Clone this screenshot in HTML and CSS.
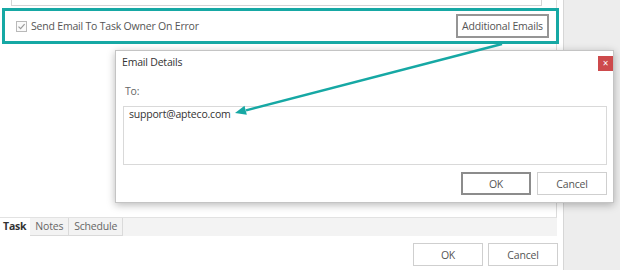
FILE: index.html
```html
<!DOCTYPE html>
<html lang="en">
<head>
    <meta charset="UTF-8">
    <meta name="viewport" content="width=device-width, initial-scale=1.0">
    <title>Task Settings</title>
    <link rel="stylesheet" href="styles.css">
</head>
<body>
    <div class="page">
        <div class="window">
            <div class="panel">
                <div class="prevBox"></div>
                <div class="notifyRow">
                    <label class="check">
                        <svg class="checkbox" width="11" height="11" viewBox="0 0 11 11">
                            <rect x="0.5" y="0.5" width="10" height="10" fill="#fafafa" stroke="#b9b9b9"/>
                            <path d="M2.5 5.6 L4.6 7.6 L8.6 3.2" fill="none" stroke="#9a9a9a" stroke-width="1.2"/>
                        </svg>
                        <span>Send Email To Task Owner On Error</span>
                    </label>
                    <button class="btn btnFocus">Additional Emails</button>
                </div>
            </div>
            <div class="tabs">
                <div class="tab active">Task</div>
                <div class="tab">Notes</div>
                <div class="tab">Schedule</div>
            </div>
            <div class="footer">
                <button class="btn">OK</button>
                <button class="btn">Cancel</button>
            </div>
        </div>
        <div class="side"></div>

        <div class="dialog">
            <div class="dialogTitle">Email Details</div>
            <div class="closeBtn">&#215;</div>
            <div class="toLabel">To:</div>
            <div class="toBox">support@apteco.com</div>
            <div class="dialogButtons">
                <button class="btn btnDark">OK</button>
                <button class="btn">Cancel</button>
            </div>
        </div>

        <svg class="arrow" width="620" height="270" viewBox="0 0 620 270">
            <line x1="502" y1="44" x2="246" y2="110.3" stroke="#16a8a4" stroke-width="2.4"/>
            <polygon points="235,113 246.8,114.8 244.5,105.8" fill="#16a8a4"/>
        </svg>
    </div>
</body>
</html>
```

FILE: styles.css
```css
body {
    margin: 0;
    font-family: "Open Sans", "Noto Sans", sans-serif;
    font-size: 10.5px;
    letter-spacing: -0.2px;
    color: #444;
}
.page {
    position: relative;
    display: flex;
    width: 620px;
    height: 270px;
    overflow: hidden;
}
.window {
    display: flex;
    flex-direction: column;
    width: 563px;
    background-color: #fff;
    border-right: 1px solid #d6d6d6;
    box-shadow: 1px 0 3px rgba(0, 0, 0, 0.12);
}
.side {
    flex: 1;
    background-color: #ededed;
}
.panel {
    width: 557px;
    height: 218px;
    box-sizing: border-box;
    border-right: 1px solid #dcdcdc;
    border-bottom: 1px solid #e2e2e2;
}
.prevBox {
    margin-left: 11px;
    width: 531px;
    height: 6px;
    box-sizing: border-box;
    border: 1px solid #d4d4d4;
    border-top: none;
}
.notifyRow {
    display: flex;
    align-items: center;
    justify-content: space-between;
    margin: 2px 0 0 2px;
    width: 557px;
    height: 36px;
    box-sizing: border-box;
    border: 3px solid #16a8a4;
    padding: 0 7px 0 11px;
}
.check {
    display: flex;
    align-items: center;
    gap: 4px;
    color: #555;
}
.btn {
    font-family: inherit;
    font-size: 10.5px;
    letter-spacing: -0.2px;
    color: #555;
    background-color: #fff;
    border: 1px solid #cfcfcf;
    width: 70px;
    height: 23px;
    padding: 0;
}
.btnFocus {
    width: 93px;
    height: 24px;
    border: 2px solid #959595;
}
.btnDark {
    border: 2px solid #8c8c8c;
}
.tabs {
    display: flex;
    width: 557px;
    height: 18px;
    background-color: #f3f3f3;
}
.tab {
    padding: 0 5px;
    line-height: 17px;
    border: 1px solid #dadada;
    border-top: none;
    border-left: none;
    color: #666;
}
.tab.active {
    font-weight: bold;
    color: #333;
    background-color: #fff;
    border: none;
    padding: 0 4px 0 3px;
}
.footer {
    display: flex;
    justify-content: flex-end;
    gap: 5px;
    width: 558px;
    margin-top: 7px;
}
.dialog {
    position: absolute;
    left: 115px;
    top: 50px;
    width: 499px;
    height: 153px;
    box-sizing: border-box;
    background-color: #fff;
    border: 1px solid #c4c4c4;
    box-shadow: 0 2px 8px rgba(0, 0, 0, 0.28);
}
.dialogTitle {
    margin: 3px 0 0 6px;
    color: #333;
    line-height: 16px;
}
.closeBtn {
    position: absolute;
    right: 0;
    top: 5px;
    width: 15px;
    height: 15px;
    background-color: #cd4a4c;
    color: #fff;
    font-size: 10px;
    line-height: 14px;
    text-align: center;
}
.toLabel {
    margin: 13px 0 0 9px;
    color: #666;
    line-height: 16px;
}
.toBox {
    margin: 7px 6px 0 7px;
    height: 59px;
    box-sizing: border-box;
    border: 1px solid #d9d9d9;
    padding: 0 5px;
    color: #333;
    line-height: 14px;
}
.dialogButtons {
    display: flex;
    justify-content: flex-end;
    gap: 6px;
    margin: 7px 6px 0 0;
}
.arrow {
    position: absolute;
    left: 0;
    top: 0;
    pointer-events: none;
}
```
